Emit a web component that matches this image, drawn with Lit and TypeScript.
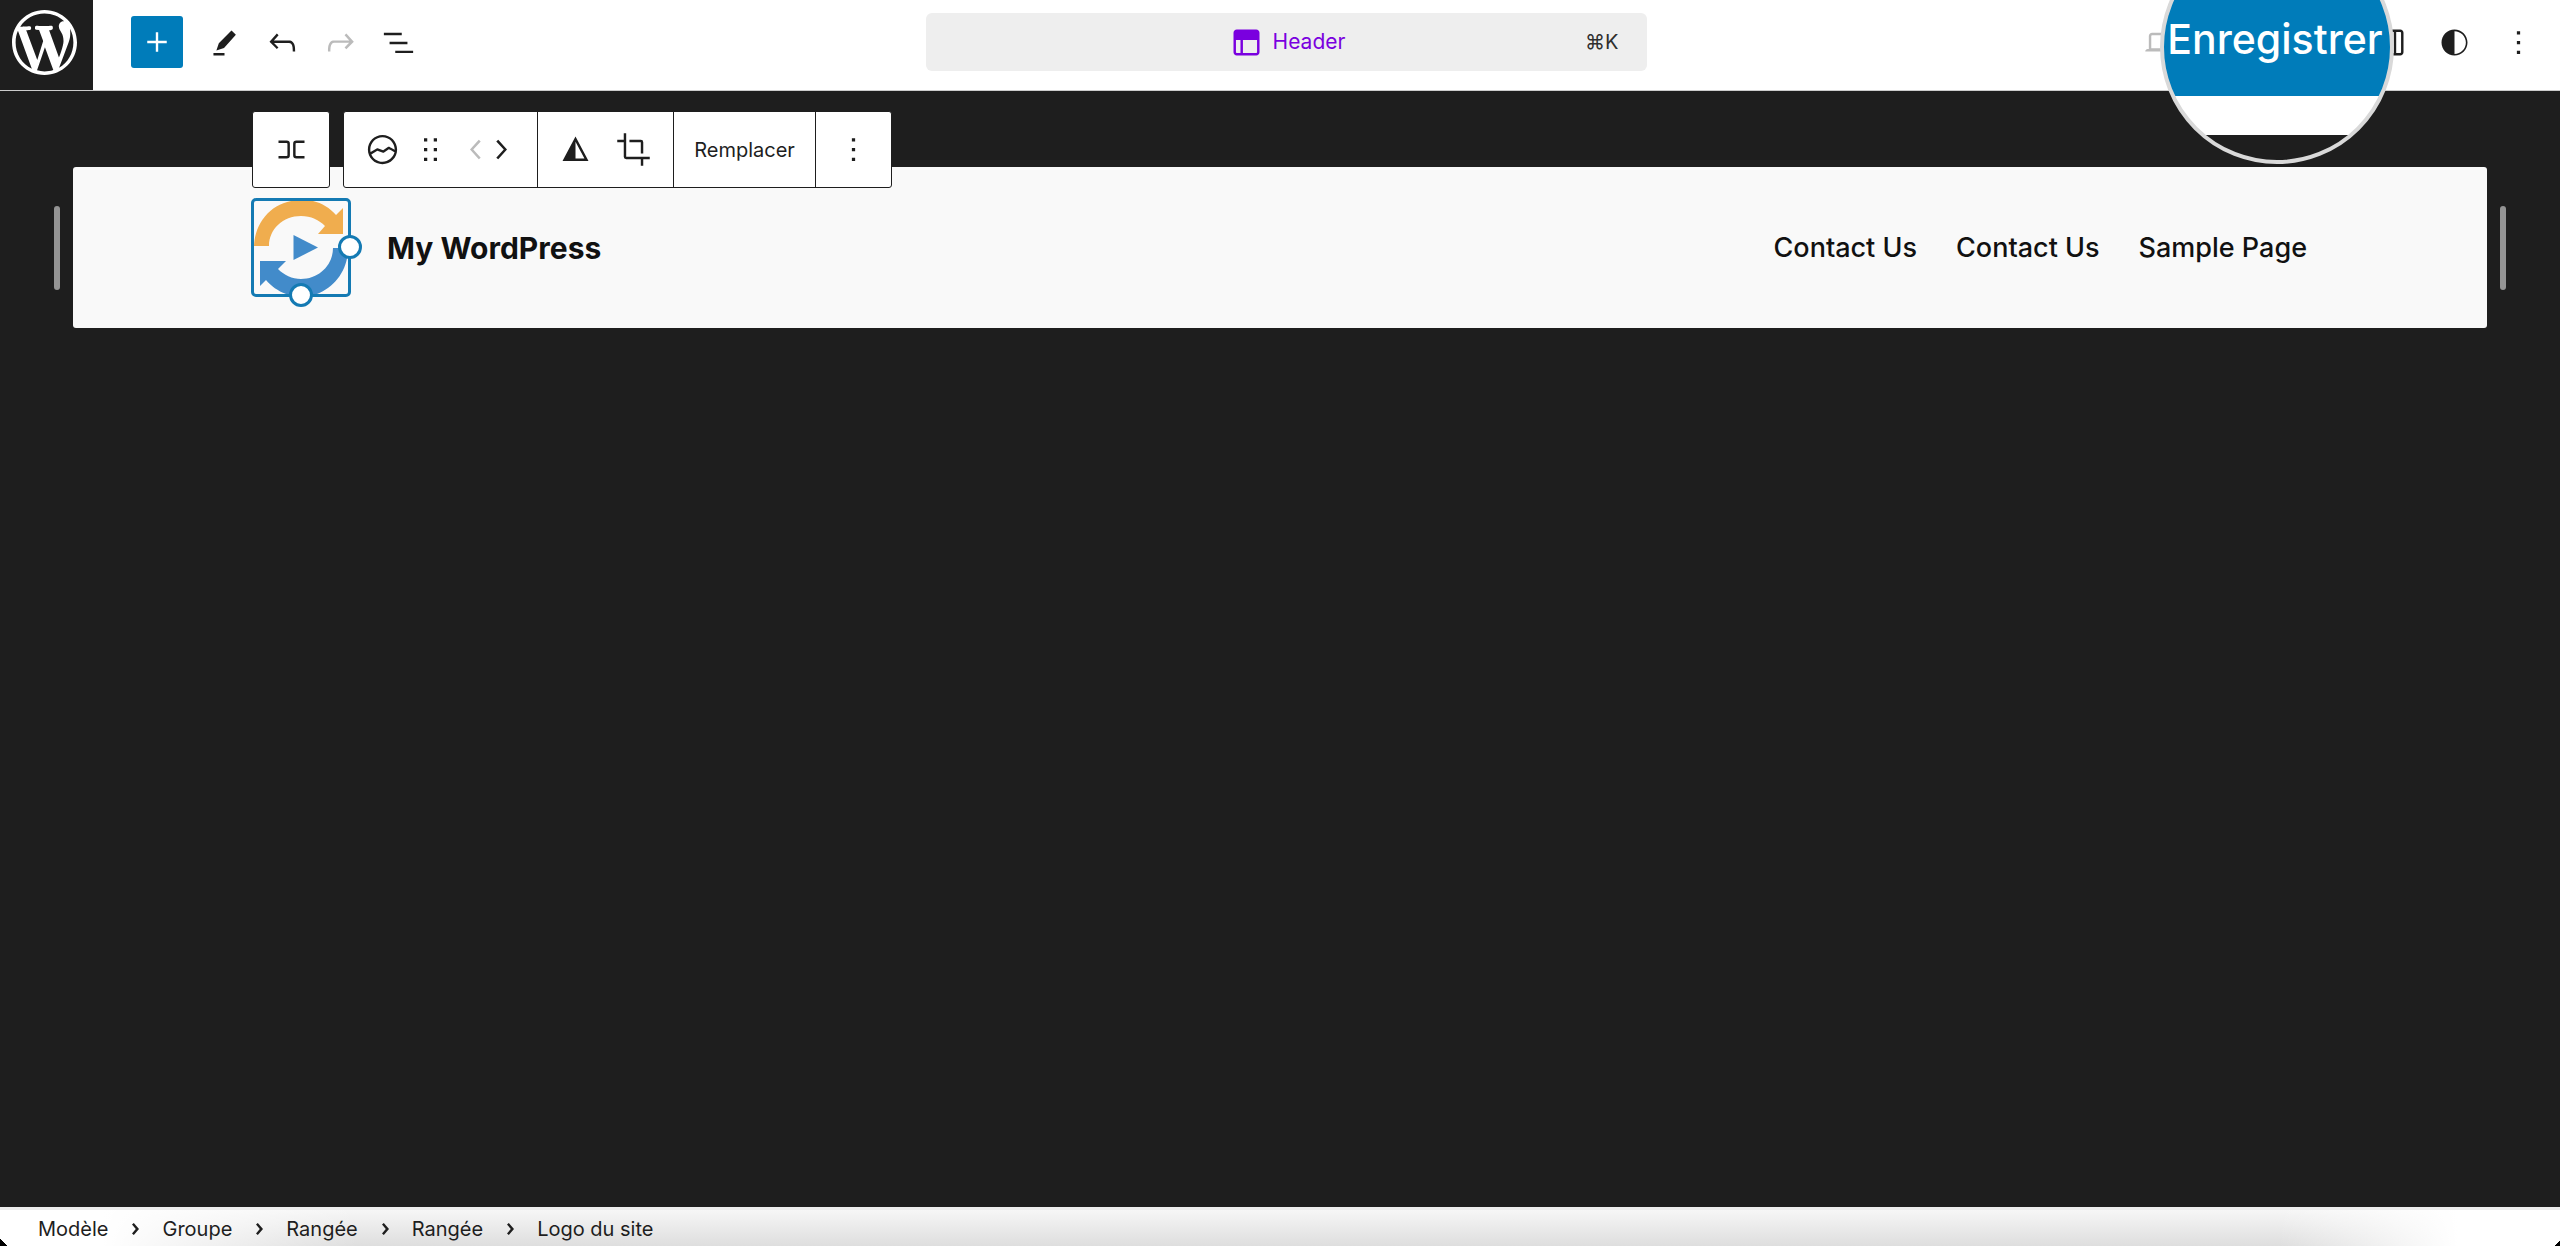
import { LitElement, html, css, svg } from "lit";
import { customElement } from "lit/decorators.js";

const PATHS: Record<string, string> = {
  wordpress:
    "M20 10c0-5.51-4.49-10-10-10C4.48 0 0 4.49 0 10c0 5.52 4.48 10 10 10 5.51 0 10-4.48 10-10zM7.78 15.37L4.37 6.22c.55-.02 1.17-.08 1.17-.08.5-.06.44-1.13-.06-1.11 0 0-1.45.11-2.37.11-.18 0-.37 0-.58-.01C4.12 2.69 6.87 1.11 10 1.11c2.33 0 4.45.87 6.05 2.34-.68-.11-1.65.39-1.65 1.58 0 .74.45 1.36.9 2.1.35.61.55 1.36.55 2.46 0 1.49-1.4 5-1.4 5l-3.03-8.37c.54-.02.82-.17.82-.17.5-.05.44-1.25-.06-1.22 0 0-1.44.12-2.38.12-.87 0-2.33-.12-2.33-.12-.5-.03-.56 1.2-.06 1.22l.92.08 1.26 3.41zM17.41 10c.24-.64.74-1.87.43-4.25.7 1.29 1.05 2.71 1.05 4.25 0 3.29-1.73 6.24-4.4 7.78.97-2.59 1.94-5.2 2.92-7.78zM6.1 18.09C3.12 16.65 1.11 13.53 1.11 10c0-1.3.23-2.48.72-3.59C3.25 10.3 4.67 14.2 6.1 18.09zm4.03-6.63l2.58 6.98c-.86.29-1.76.45-2.71.45-.79 0-1.57-.11-2.29-.33.81-2.38 1.62-4.74 2.42-7.1z",
  plus: "M10.9 3v7.9H3v2.2h7.9V21h2.2v-7.9H21v-2.2h-7.9V3z",
  edit: "M16.3 4.6 19 7.3 11.7 15.4 7 16.9 8.5 12.4zM5.2 18.5H12V20H5.2z",
  undo: "M18.3 11.7c-.6-.6-1.4-.9-2.3-.9H6.7l2.9-3.3-1.1-1-4.5 5L8.5 16l1-1-2.7-2.7H16c.5 0 .9.2 1.3.5 1 1 1 3.4 1 4.5v.3h1.5v-.2c0-1.5 0-4.3-1.5-5.7z",
  redo: "M15.6 6.5l-1.1 1 2.9 3.3H8c-.9 0-1.7.3-2.3.9-1.4 1.5-1.4 4.2-1.4 5.6v.2h1.5v-.3c0-1.1 0-3.5 1-4.5.3-.3.7-.5 1.3-.5h9.2L14.5 15l1.1 1.1 4.6-4.6-4.6-5z",
  list: "M3 6h11v1.5H3V6Zm3.5 5.5h11V13h-11v-1.5ZM21 17H10v1.5h11V17Z",
  layout:
    "M18 4H6c-1.1 0-2 .9-2 2v12c0 1.1.9 2 2 2h12c1.1 0 2-.9 2-2V6c0-1.1-.9-2-2-2zM8.3 18.5H6c-.3 0-.5-.2-.5-.5v-7.6h2.8v8.1zm10.2-.5c0 .3-.2.5-.5.5H9.8v-8.1h8.7V18z",
  desktop:
    "M20.5 16h-.7V8c0-1.1-.9-2-2-2H6.2c-1.1 0-2 .9-2 2v8h-.7c-.8 0-1.5.7-1.5 1.5h20c0-.8-.7-1.5-1.5-1.5zM5.7 8c0-.3.2-.5.5-.5h11.6c.3 0 .5.2.5.5v7.6H5.7V8z",
  sidebar:
    "M18 4H6c-1.1 0-2 .9-2 2v12c0 1.1.9 2 2 2h12c1.1 0 2-.9 2-2V6c0-1.1-.9-2-2-2zm-4 14.5H6c-.3 0-.5-.2-.5-.5V6c0-.3.2-.5.5-.5h8v13zm4.5-.5c0 .3-.2.5-.5.5h-2.5v-13H18c.3 0 .5.2.5.5v12z",
  styles:
    "M12 4c-4.4 0-8 3.6-8 8s3.6 8 8 8 8-3.6 8-8-3.6-8-8-8zm0 15V5c3.9 0 7 3.1 7 7s-3.1 7-7 7z",
  more: "M13 19h-2v-2h2v2zm0-6h-2v-2h2v2zm0-6h-2V5h2v2z",
  row: "M4 6.5h5a2 2 0 0 1 2 2v7a2 2 0 0 1-2 2H4V16h5a.5.5 0 0 0 .5-.5v-7A.5.5 0 0 0 9 8H4V6.5Zm16 0h-5a2 2 0 0 0-2 2v7a2 2 0 0 0 2 2h5V16h-5a.5.5 0 0 1-.5-.5v-7A.5.5 0 0 1 15 8h5V6.5Z",
  siteLogo:
    "M12 3c-5 0-9 4-9 9s4 9 9 9 9-4 9-9-4-9-9-9zm0 1.5c4.1 0 7.5 3.4 7.5 7.5v.1c-1.4-.8-3.3-1.7-3.4-1.8-.2-.1-.5-.1-.8.1l-2.9 2.1L9 11.3c-.2-.1-.4 0-.6.1l-3.7 2.2c-.1-.5-.2-1-.2-1.5 0-4.2 3.4-7.6 7.5-7.6zm0 15c-3.1 0-5.7-1.9-6.9-4.5l3.7-2.2 3.5 1.2c.2.1.5 0 .7-.1l2.9-2.1c.8.4 2.5 1.2 3.5 1.9-.9 3.3-3.9 5.8-7.4 5.8z",
  drag: "M8 7h2V5H8v2zm0 6h2v-2H8v2zm0 6h2v-2H8v2zm6-14v2h2V5h-2zm0 8h2v-2h-2v2zm0 6h2v-2h-2v2z",
  left: "M14.6 7l-1.2-1L8 12l5.4 6 1.2-1-4.6-5z",
  right: "M10.6 6L9.4 7l4.6 5-4.6 5 1.2 1 5.4-6z",
  crumb: "M10.8 6 9 7.6l3.8 4.4L9 16.4l1.8 1.6L16 12z",
  duotone: "M12 4 4 19h16L12 4zm0 3.2 5.5 10.3H12V7.2z",
  crop: "M9.5 6h7A1.5 1.5 0 0 1 18 7.5v7h-1.5v-7h-7zM6 2h1.5v14.5H22V18h-4v4h-1.5v-4h-9A1.5 1.5 0 0 1 6 16.5v-9H2V6h4z",
};

const icon = (name: string) => html`<svg
  class="icon"
  viewBox=${name === "wordpress" ? "0 0 20 20" : "0 0 24 24"}
  aria-hidden="true"
>
  ${svg`<path d=${PATHS[name]} fill-rule="evenodd"></path>`}
</svg>`;

const CRUMBS = ["Modèle", "Groupe", "Rangée", "Rangée", "Logo du site"];
const PAGES = ["Contact Us", "Contact Us", "Sample Page"];

@customElement("app-root")
export class AppRoot extends LitElement {
  static styles = css`
    :host {
      display: flex;
      flex-direction: column;
      position: relative;
      min-height: 100vh;
      overflow: hidden;
      background: #1e1e1e;
      color: #1e1e1e;
      font-family: Inter, "Liberation Sans", sans-serif;
      font-size: 20px;
      line-height: 24px;
    }
    * {
      box-sizing: border-box;
    }
    button {
      display: flex;
      align-items: center;
      justify-content: center;
      padding: 0;
      border: 0;
      background: none;
      color: inherit;
      font: inherit;
      cursor: pointer;
    }
    button:disabled {
      color: #bbb;
      cursor: default;
    }
    .icon {
      display: block;
      flex: none;
      width: 39px;
      height: 39px;
      fill: currentColor;
    }

    .topbar {
      display: flex;
      height: 91px;
      background: #fff;
      border-bottom: 1px solid #ccc;
    }
    .side {
      flex: 1;
      display: flex;
    }
    .home {
      display: flex;
      width: 93px;
      padding: 10px 0 0 12px;
      background: #1e1e1e;
      color: #fff;
    }
    .home .icon {
      width: 65px;
      height: 65px;
    }
    .tools {
      display: flex;
      align-items: center;
      padding: 0 0 6px 38px;
    }
    .tools button {
      width: 58px;
      height: 52px;
    }
    .tools .add {
      width: 52px;
      margin-right: 12px;
      border-radius: 3px;
      background: #007cba;
      color: #fff;
    }
    .add .icon {
      width: 26px;
      height: 26px;
    }
    .command {
      display: grid;
      grid-template-columns: 1fr auto 1fr;
      width: 28%;
      min-width: 721px;
      height: 58px;
      margin: 13px 0 0 28px;
      padding: 0 28px;
      border-radius: 6px;
      background: #eee;
    }
    .doc {
      grid-column: 2;
      display: flex;
      align-items: center;
      gap: 7px;
      color: #7a00df;
      font-size: 21px;
    }
    .keys {
      justify-self: end;
      color: #2f2f2f;
    }
    .end {
      justify-content: flex-end;
      align-items: center;
      padding: 0 16px 6px 0;
    }
    .end button {
      width: 52px;
      height: 52px;
    }
    .end .device {
      width: 45px;
      margin-right: 180px;
      color: #bbb;
    }
    .end .contrast {
      margin: 0 12px;
    }

    .lens {
      position: absolute;
      top: -70px;
      right: 166px;
      width: 234px;
      height: 234px;
      border: 4px solid #d9d9d9;
      border-radius: 50%;
      overflow: hidden;
      background: linear-gradient(#007cba 162px, #fff 162px, #fff 201px, #1e1e1e 201px);
    }
    .lens button {
      width: 100%;
      height: 162px;
      padding: 48px 4px 0 0;
      color: #fff;
      font-size: 41px;
      font-weight: 500;
      line-height: 48px;
      white-space: nowrap;
    }

    .canvas {
      flex: 1;
      position: relative;
      display: flex;
      align-items: flex-start;
      gap: 13px;
      padding: 76px 54px 0;
    }
    .resizer {
      flex: none;
      width: 6px;
      height: 84px;
      margin-top: 39px;
      border-radius: 3px;
      background: #949494;
    }
    .site {
      flex: 1;
      display: flex;
      align-items: center;
      height: 161px;
      padding: 0 180px 0 178px;
      border-radius: 3px;
      background: #f9f9f9;
      color: #111;
    }
    .logo {
      position: relative;
      flex: none;
      width: 100px;
      height: 99px;
      border: 3px solid #147ab3;
      border-radius: 5px;
    }
    .logo svg {
      display: block;
      width: 94px;
      height: 93px;
    }
    .grip {
      position: absolute;
      width: 24px;
      height: 24px;
      border: 3px solid #147ab3;
      border-radius: 50%;
      background: #fff;
    }
    .grip.east {
      right: -14px;
      top: 34px;
    }
    .grip.south {
      bottom: -13px;
      left: 35px;
    }
    .title {
      flex: 1;
      margin: 0 0 0 36px;
      font-size: 30px;
      line-height: 36px;
      font-weight: 700;
    }
    .nav {
      display: flex;
      gap: 39px;
      font-size: 27px;
      line-height: 32px;
      font-weight: 500;
    }
    .nav a {
      color: inherit;
      text-decoration: none;
    }

    .blockbar {
      position: absolute;
      top: 20px;
      left: 252px;
      display: flex;
      gap: 13px;
    }
    .group {
      display: flex;
      height: 77px;
      border: 1px solid #1e1e1e;
      border-radius: 3px;
      background: #fff;
    }
    .group > button {
      width: 76px;
    }
    .part {
      display: flex;
      align-items: stretch;
      padding: 0 18px;
    }
    .part + .part {
      border-left: 1px solid #1e1e1e;
    }
    .part.type {
      padding: 0 22px 0 19px;
      width: 193px;
    }
    .part.media {
      width: 136px;
      gap: 19px;
    }
    .movers {
      display: flex;
      margin-left: 20px;
    }
    .movers button {
      width: 24px;
    }
    .type .drag {
      width: 28px;
      margin-left: 14px;
    }
    .part.text {
      width: 142px;
      justify-content: center;
      padding: 0;
    }

    .crumbs {
      display: flex;
      align-items: center;
      height: 39px;
      padding: 1px 38px 0;
      border-top: 3px solid #ededed;
      background:
        linear-gradient(45deg, #000 50%, transparent 50%) left bottom / 7px 7px no-repeat,
        linear-gradient(315deg, #000 50%, transparent 50%) right bottom / 5px 5px no-repeat,
        linear-gradient(90deg, #fff 4%, #fff0 14%, #fff0 89%, #fff 96%),
        linear-gradient(#f6f6f6, #dedede);
    }
    .crumbs ol {
      display: flex;
      margin: 0;
      padding: 0;
      list-style: none;
    }
    .crumbs li {
      display: flex;
      align-items: center;
    }
    .crumbs .icon {
      width: 24px;
      height: 24px;
      margin: 0 15px;
    }
  `;

  render() {
    return html`
      <header class="topbar">
        <div class="side">
          <a class="home" href="#" aria-label="WordPress">${icon("wordpress")}</a>
          <div class="tools">
            <button class="add" aria-label="Ajouter">${icon("plus")}</button>
            <button aria-label="Outils">${icon("edit")}</button>
            <button aria-label="Annuler">${icon("undo")}</button>
            <button aria-label="Rétablir" disabled>${icon("redo")}</button>
            <button aria-label="Vue en liste">${icon("list")}</button>
          </div>
        </div>
        <button class="command">
          <span class="doc">${icon("layout")}<span>Header</span></span>
          <span class="keys">⌘K</span>
        </button>
        <div class="side end">
          <button class="device" aria-label="Aperçu">${icon("desktop")}</button>
          <button aria-label="Réglages">${icon("sidebar")}</button>
          <button class="contrast" aria-label="Styles">${icon("styles")}</button>
          <button aria-label="Options">${icon("more")}</button>
        </div>
      </header>

      <main class="canvas">
        <div class="resizer"></div>
        <section class="site">
          <div class="logo">
            <svg viewBox="0 0 94 93" role="img" aria-label="Logo du site">
              <path
                fill="#f0ad4e"
                d="M0 45C1 22 16 4 37 0H59C68 2 76 7 82 14L89 7V33H64L71 25C65 19 57 15 47 15C29 15 15 28 15 45Z"
              />
              <path
                fill="#428bca"
                d="M94 47H79C79 64 65 78 47 78C38 78 30 74 24 68L32 60H6V85L12 79C17 85 24 90 32 93H63C81 86 94 69 94 47Z"
              />
              <path fill="#428bca" d="M39.500 34 64 46.500 39.500 59z" />
            </svg>
            <span class="grip east"></span>
            <span class="grip south"></span>
          </div>
          <h1 class="title">My WordPress</h1>
          <nav class="nav">${PAGES.map((p) => html`<a href="#">${p}</a>`)}</nav>
        </section>
        <div class="resizer"></div>

        <div class="blockbar" role="toolbar">
          <div class="group">
            <button aria-label="Bloc parent">${icon("row")}</button>
          </div>
          <div class="group">
            <div class="part type">
              <button aria-label="Logo du site">${icon("siteLogo")}</button>
              <button class="drag" aria-label="Déplacer">${icon("drag")}</button>
              <div class="movers">
                <button aria-label="Vers la gauche" disabled>${icon("left")}</button>
                <button aria-label="Vers la droite">${icon("right")}</button>
              </div>
            </div>
            <div class="part media">
              <button aria-label="Filtre">${icon("duotone")}</button>
              <button aria-label="Recadrer">${icon("crop")}</button>
            </div>
            <div class="part text"><button>Remplacer</button></div>
            <div class="part"><button aria-label="Options">${icon("more")}</button></div>
          </div>
        </div>
      </main>

      <footer class="crumbs">
        <ol>
          ${CRUMBS.map(
            (c, i) => html`<li>${i ? icon("crumb") : ""}<span>${c}</span></li>`
          )}
        </ol>
      </footer>

      <div class="lens"><button>Enregistrer</button></div>
    `;
  }
}
